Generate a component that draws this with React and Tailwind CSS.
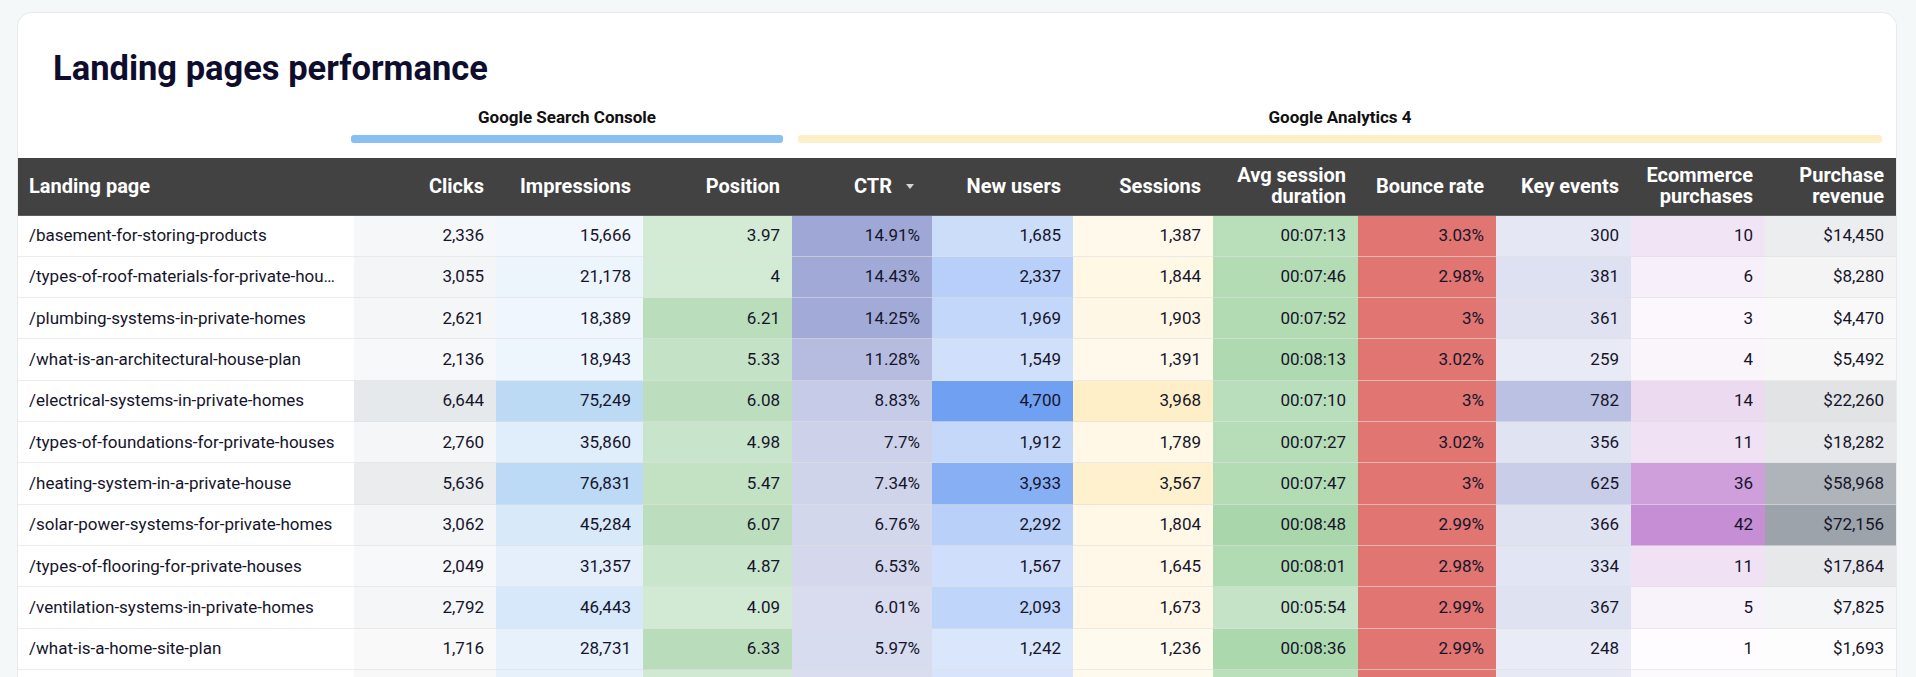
import React from 'react';

// landing page rows: page, clicks, impressions, position, ctr, new users, sessions, avg duration, bounce, key events, purchases, revenue
const rows = [
  ['/basement-for-storing-products', 2336, 15666, 3.97, 14.91, 1685, 1387, '00:07:13', 3.03, 300, 10, 14450],
  ['/types-of-roof-materials-for-private-houses', 3055, 21178, 4, 14.43, 2337, 1844, '00:07:46', 2.98, 381, 6, 8280],
  ['/plumbing-systems-in-private-homes', 2621, 18389, 6.21, 14.25, 1969, 1903, '00:07:52', 3, 361, 3, 4470],
  ['/what-is-an-architectural-house-plan', 2136, 18943, 5.33, 11.28, 1549, 1391, '00:08:13', 3.02, 259, 4, 5492],
  ['/electrical-systems-in-private-homes', 6644, 75249, 6.08, 8.83, 4700, 3968, '00:07:10', 3, 782, 14, 22260],
  ['/types-of-foundations-for-private-houses', 2760, 35860, 4.98, 7.7, 1912, 1789, '00:07:27', 3.02, 356, 11, 18282],
  ['/heating-system-in-a-private-house', 5636, 76831, 5.47, 7.34, 3933, 3567, '00:07:47', 3, 625, 36, 58968],
  ['/solar-power-systems-for-private-homes', 3062, 45284, 6.07, 6.76, 2292, 1804, '00:08:48', 2.99, 366, 42, 72156],
  ['/types-of-flooring-for-private-houses', 2049, 31357, 4.87, 6.53, 1567, 1645, '00:08:01', 2.98, 334, 11, 17864],
  ['/ventilation-systems-in-private-homes', 2792, 46443, 4.09, 6.01, 2093, 1673, '00:05:54', 2.99, 367, 5, 7825],
  ['/what-is-a-home-site-plan', 1716, 28731, 6.33, 5.97, 1242, 1236, '00:08:36', 2.99, 248, 1, 1693],
  ['/how-to-insulate-a-private-house', 1984, 27402, 4.12, 5.84, 1318, 1296, '00:07:05', 2.99, 271, 2, 2874],
];

const num = (v) => v.toLocaleString('en-US');
const pct = (v) => v + '%';
const secs = (t) => {
  const [h, m, s] = t.split(':').map(Number);
  return h * 3600 + m * 60 + s;
};

const columns = [
  { label: ['Landing page'], left: true },
  { label: ['Clicks'], hi: '#e6e9eb', fmt: num },
  { label: ['Impressions'], hi: '#bcd9f5', fmt: num },
  { label: ['Position'], hi: '#b9ddbb', fmt: String },
  { label: ['CTR'], hi: '#9ea7d6', fmt: pct, sort: true },
  { label: ['New users'], hi: '#70a0f2', fmt: num },
  { label: ['Sessions'], hi: '#ffefc8', fmt: num },
  { label: ['Avg session', 'duration'], hi: '#a9d7ab', fmt: String, val: secs },
  { label: ['Bounce rate'], fixed: '#e07572', fmt: pct },
  { label: ['Key events'], hi: '#bbc1e2', fmt: num },
  { label: ['Ecommerce', 'purchases'], hi: '#c68fd5', fmt: num },
  { label: ['Purchase', 'revenue'], hi: '#9da3aa', fmt: (v) => '$' + num(v) },
];

function mix(hex, t) {
  const n = parseInt(hex.slice(1), 16);
  const m = (c) => Math.round(255 + (c - 255) * t);
  return `rgb(${m((n >> 16) & 255)}, ${m((n >> 8) & 255)}, ${m(n & 255)})`;
}

const maxes = columns.map((col, i) =>
  i === 0 ? 0 : Math.max(...rows.map((r) => (col.val ? col.val(r[i]) : r[i])))
);

function cellColor(col, i, v) {
  if (i === 0) return '#ffffff';
  if (col.fixed) return col.fixed;
  const value = col.val ? col.val(v) : v;
  return mix(col.hi, value / maxes[i]);
}

const gridCols =
  'grid grid-cols-[336px_142px_147px_149px_140px_141px_140px_145px_138px_135px_134px_1fr]';

function HeaderRow() {
  return (
    <div className={gridCols + ' h-[58px] bg-[#424242] border-b border-[#5e5e5e]'}>
      {columns.map((col, i) => (
        <div
          key={i}
          className={
            'flex items-center text-[20px] leading-[21px] font-bold text-white ' +
            (col.left ? 'justify-start pl-[11px] pr-3' : 'justify-end text-right pr-3')
          }
        >
          <div>
            {col.label.map((l) => (
              <div key={l}>{l}</div>
            ))}
          </div>
          {col.sort && (
            <span className="ml-2 w-5 flex justify-center">
              <span className="w-0 h-0 border-l-[4px] border-r-[4px] border-t-[5px] border-l-transparent border-r-transparent border-t-[#d6d6d6]" />
            </span>
          )}
        </div>
      ))}
    </div>
  );
}

function DataRow({ row }) {
  return (
    <div className={gridCols + ' h-[41.33px]'}>
      {columns.map((col, i) => (
        <div
          key={i}
          style={{ backgroundColor: cellColor(col, i, row[i]) }}
          className={
            'flex items-center min-w-0 border-b border-[#e0e0e0]/60 text-[17px] text-[#15142a] ' +
            (col.left ? 'justify-start pl-[11px] pr-3' : 'justify-end pr-3')
          }
        >
          <span className="truncate">{i === 0 ? row[i] : col.fmt(row[i])}</span>
        </div>
      ))}
    </div>
  );
}

export default function App() {
  return (
    <div className="min-h-screen bg-[#f5f8f9] pt-[13px] pl-[18px] pr-[20px] overflow-hidden font-[Roboto,'Noto_Sans',sans-serif]">
      <div className="bg-white rounded-t-[14px] shadow-[0_0_0_1px_#e6eaed] overflow-hidden">
        <h1 className="pt-[38px] pl-[35px] text-[34.5px] leading-none font-bold text-[#0f0d2e]">
          Landing pages performance
        </h1>

        <div className="flex mt-[23px]">
          <div className="w-[333px] shrink-0" />
          <div className="w-[432px] shrink-0 flex flex-col items-center">
            <div className="text-[17px] leading-none font-bold text-[#111111] h-[17px]">Google Search Console</div>
            <div className="mt-[9px] h-[8px] w-full rounded-[3px] bg-[#8ac0f1]" />
          </div>
          <div className="w-[15px] shrink-0" />
          <div className="w-[1084px] shrink-0 flex flex-col items-center">
            <div className="text-[17px] leading-none font-bold text-[#111111] h-[17px]">Google Analytics 4</div>
            <div className="mt-[9px] h-[8px] w-full rounded-[3px] bg-[#fdefc8]" />
          </div>
        </div>

        <div className="mt-[15px]">
          <HeaderRow />
          {rows.map((r) => (
            <DataRow key={r[0]} row={r} />
          ))}
        </div>
      </div>
    </div>
  );
}
